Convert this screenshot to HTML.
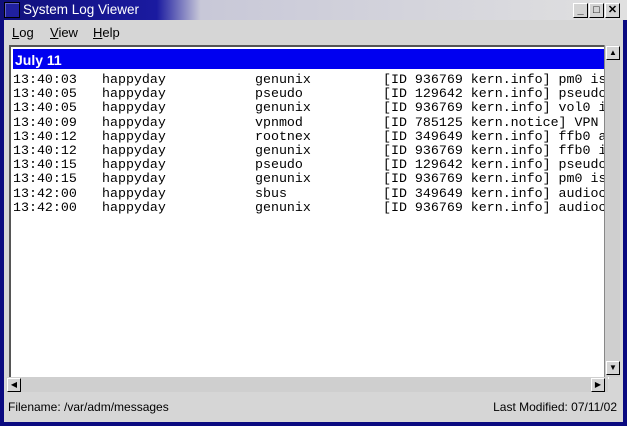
<!DOCTYPE html>
<html><head><style>
body{margin:0;width:627px;height:426px;overflow:hidden;background:#1c1c8c;font-family:"Liberation Sans",sans-serif;position:relative}
.win{position:absolute;left:0;top:0;width:627px;height:426px;background:#0a0a80;}
.title{position:absolute;left:0;top:0;width:627px;height:20px;background:linear-gradient(90deg,#10107a 0,#1a1aa0 25%,#c8c8d8 32%,#e0e0e0 100%)}
.ticon{position:absolute;left:4px;top:2px;width:14px;height:14px;background:#2020a0;border:1px solid #000;box-shadow:inset 1px 1px #6060c0}
.ttext{position:absolute;left:23px;top:2px;color:#fff;font-size:13.5px}
.tb{position:absolute;top:3px;width:13px;height:13px;background:#d4d4d4;border:1px solid;border-color:#fff #000 #000 #fff;font-size:11px;font-weight:bold;text-align:center;line-height:13px}
.body{position:absolute;left:4px;top:20px;width:619px;height:402px;background:#d6d6d6}
.menu{position:absolute;left:0;top:2px;height:20px;font-size:13px}
.menu span{position:absolute;top:3px}
.pane{position:absolute;left:5px;top:25px;width:598px;height:332px;background:#fff;border-left:2px solid #555;border-top:2px solid #555;overflow:hidden}
.hl{position:absolute;left:2px;top:2px;width:596px;height:20px;background:#0000f0;color:#fff;font-weight:bold;font-size:14px;line-height:22px;text-indent:2px}
.rows{position:absolute;left:0;top:26px;width:598px;font-family:"Liberation Mono",monospace;font-size:13.3px;line-height:14.2px;color:#000}
.r{position:relative;height:14.2px}
.r span{position:absolute;top:0;white-space:pre}
.c1{left:2px}.c2{left:91px}.c3{left:244px}.c4{left:372px}
.vs{position:absolute;left:600px;top:25px;width:15px;height:332px;background:#cfcfcf;border-left:1px solid #888}
.hs{position:absolute;left:0;top:357px;width:602px;height:15px;background:#cfcfcf}
.arr{position:absolute;width:12px;height:12px;background:#d4d4d4;border:1px solid;border-color:#fff #000 #000 #fff;font-size:8px;text-align:center;line-height:12px}
.status{position:absolute;top:380px;font-size:12px;color:#000}
</style></head><body>
<div class="win">
<div class="title"><div class="ticon"></div><div class="ttext">System Log Viewer</div>
<div class="tb" style="left:573px">_</div><div class="tb" style="left:589px">□</div><div class="tb" style="left:605px">✕</div></div>
<div class="body">
<div class="menu"><span style="left:8px"><u>L</u>og</span><span style="left:46px"><u>V</u>iew</span><span style="left:89px"><u>H</u>elp</span></div>
<div class="pane">
<div class="hl">July 11</div>
<div class="rows">
<div class="r"><span class="c1">13:40:03</span><span class="c2">happyday</span><span class="c3">genunix</span><span class="c4">[ID 936769 kern.info] pm0 is</span></div>
<div class="r"><span class="c1">13:40:05</span><span class="c2">happyday</span><span class="c3">pseudo</span><span class="c4">[ID 129642 kern.info] pseudo</span></div>
<div class="r"><span class="c1">13:40:05</span><span class="c2">happyday</span><span class="c3">genunix</span><span class="c4">[ID 936769 kern.info] vol0 i</span></div>
<div class="r"><span class="c1">13:40:09</span><span class="c2">happyday</span><span class="c3">vpnmod</span><span class="c4">[ID 785125 kern.notice] VPN</span></div>
<div class="r"><span class="c1">13:40:12</span><span class="c2">happyday</span><span class="c3">rootnex</span><span class="c4">[ID 349649 kern.info] ffb0 a</span></div>
<div class="r"><span class="c1">13:40:12</span><span class="c2">happyday</span><span class="c3">genunix</span><span class="c4">[ID 936769 kern.info] ffb0 i</span></div>
<div class="r"><span class="c1">13:40:15</span><span class="c2">happyday</span><span class="c3">pseudo</span><span class="c4">[ID 129642 kern.info] pseudo</span></div>
<div class="r"><span class="c1">13:40:15</span><span class="c2">happyday</span><span class="c3">genunix</span><span class="c4">[ID 936769 kern.info] pm0 is</span></div>
<div class="r"><span class="c1">13:42:00</span><span class="c2">happyday</span><span class="c3">sbus</span><span class="c4">[ID 349649 kern.info] audioc</span></div>
<div class="r"><span class="c1">13:42:00</span><span class="c2">happyday</span><span class="c3">genunix</span><span class="c4">[ID 936769 kern.info] audioc</span></div>
</div>
</div>
<div class="vs"><div class="arr" style="left:1px;top:1px">▲</div><div class="arr" style="left:1px;top:316px">▼</div></div>
<div class="hs" style="left:2px"><div class="arr" style="left:1px;top:1px">◀</div><div class="arr" style="left:585px;top:1px">▶</div></div>
<div class="status" style="left:4px">Filename: /var/adm/messages</div>
<div class="status" style="right:6px">Last Modified: 07/11/02</div>
</div>
</div>
</body></html>
